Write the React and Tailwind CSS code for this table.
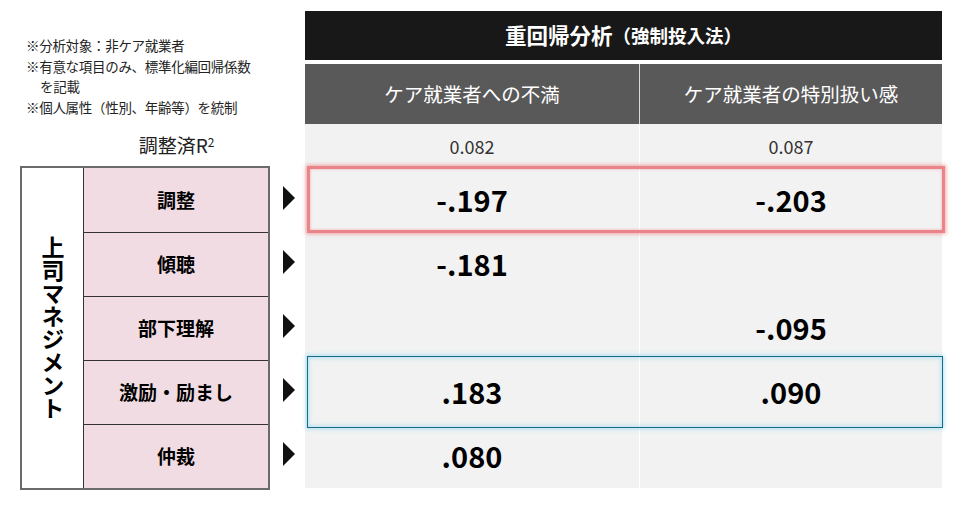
const font = { fontFamily: '"Noto Sans CJK JP", "Noto Sans", sans-serif' };

const rows = [
  { label: '調整', a: '-.197', b: '-.203', mark: 'red' },
  { label: '傾聴', a: '-.181', b: '' },
  { label: '部下理解', a: '', b: '-.095' },
  { label: '激励・励まし', a: '.183', b: '.090', mark: 'blue' },
  { label: '仲裁', a: '.080', b: '' },
];

const Arrow = () => (
  <svg width="12" height="24" viewBox="0 0 12 24">
    <polygon points="0,0 12,12 0,24" fill="#111" />
  </svg>
);

const Notes = () => (
  <div className="h-[124px] pl-[26px] pt-[35px] text-[13.5px] leading-[20.5px] tracking-[-0.3px] text-[#222]">
    <p>※分析対象：非ケア就業者</p>
    <p>※有意な項目のみ、標準化編回帰係数</p>
    <p className="pl-[14px]">を記載</p>
    <p>※個人属性（性別、年齢等）を統制</p>
  </div>
);

const LeftTable = () => (
  <div className="flex">
    <div className="ml-[20px] flex w-[250px] border-2 border-[#6b6b6b]">
      <div className="flex w-[62px] items-center justify-center border-r border-[#333] bg-white">
        <span className="text-[23px] font-bold leading-[23px] text-black [writing-mode:vertical-rl] [text-orientation:upright]">
          上司マネジメント
        </span>
      </div>
      <div className="flex flex-1 flex-col">
        {rows.map((r, i) => (
          <div
            key={r.label}
            className={`flex h-[64px] items-center justify-center bg-[#f2dce3] text-[19px] font-bold text-black ${
              i > 0 ? 'border-t border-[#333]' : ''
            }`}
          >
            {r.label}
          </div>
        ))}
      </div>
    </div>
    <div className="flex flex-col pl-[13px]">
      {rows.map((r) => (
        <div key={r.label} className="flex h-[64px] items-center">
          <Arrow />
        </div>
      ))}
    </div>
  </div>
);

const DataRow = ({ row }) => (
  <div className="relative flex h-[64px] bg-[#f2f2f2]">
    <div className="flex w-[335px] items-center justify-center border-r border-white text-[29px] font-bold text-black">
      {row.a}
    </div>
    <div className="flex flex-1 items-center justify-center text-[29px] font-bold text-black">
      {row.b}
    </div>
    {row.mark === 'red' && (
      <div className="absolute -top-[2px] -bottom-[1px] left-[2px] -right-[3px] z-10 border-[3px] border-[#ea8489] shadow-[0_0_4px_1px_rgba(235,110,115,0.6),inset_0_0_3px_rgba(235,110,115,0.5)]" />
    )}
    {row.mark === 'blue' && (
      <div className="absolute -top-[4px] -bottom-[4px] left-[2px] -right-[1px] z-10 border-[1.5px] border-[#1b6a86] shadow-[0_0_4px_1px_rgba(150,220,240,0.8),inset_0_0_4px_1px_rgba(150,220,240,0.7)]" />
    )}
  </div>
);

const RightTable = () => (
  <div className="flex w-[637px] flex-col pt-[11px]">
    <div className="flex h-[49px] items-center justify-center bg-[#181818] font-bold text-white">
      <span className="text-[21.5px]">重回帰分析</span>
      <span className="text-[18.5px]">（強制投入法）</span>
    </div>
    <div className="mt-[4px] flex h-[60px] bg-[#595959] text-[19.5px] text-white">
      <div className="flex w-[335px] items-center justify-center border-r border-[#d9d9d9]">ケア就業者への不満</div>
      <div className="flex flex-1 items-center justify-center">ケア就業者の特別扱い感</div>
    </div>
    <div className="flex h-[44px] bg-[#f2f2f2] text-[18px] text-[#333]">
      <div className="flex w-[335px] items-center justify-center border-r border-white">0.082</div>
      <div className="flex flex-1 items-center justify-center">0.087</div>
    </div>
    {rows.map((r) => (
      <DataRow key={r.label} row={r} />
    ))}
  </div>
);

export default function App() {
  return (
    <div className="flex h-[510px] w-[960px] bg-white" style={font}>
      <div className="flex w-[305px] flex-col">
        <Notes />
        <div className="flex h-[42px] items-center pl-[83px]">
          <div className="w-[187px] text-center text-[19px] text-[#222]">
            調整済R<sup className="text-[12px]">2</sup>
          </div>
        </div>
        <LeftTable />
      </div>
      <RightTable />
    </div>
  );
}
